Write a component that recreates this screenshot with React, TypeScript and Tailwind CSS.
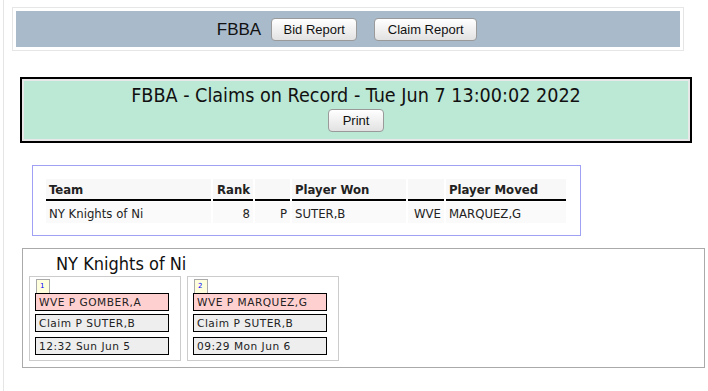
const tahoma = "font-['DejaVu_Sans_Condensed','DejaVu_Sans',sans-serif]";
const verdana = "font-['DejaVu_Sans',Verdana,sans-serif]";
const arial = "font-['Liberation_Sans',Arial,sans-serif]";

function OldButton({ label, w }: { label: string; w: string }) {
  return (
    <button
      type="button"
      className={`${arial} ${w} h-[23px] rounded-[4px] border border-[#9a9a9a] bg-gradient-to-b from-white to-[#e2e2e2] text-[13px] text-[#111] shadow-[inset_0_1px_0_#fff]`}
    >
      {label}
    </button>
  );
}

const claims = [
  { n: '1', drop: 'WVE P GOMBER,A', claim: 'Claim P SUTER,B', when: '12:32 Sun Jun 5' },
  { n: '2', drop: 'WVE P MARQUEZ,G', claim: 'Claim P SUTER,B', when: '09:29 Mon Jun 6' },
];

function ClaimCard({ c }: { c: (typeof claims)[number] }) {
  const row = `${verdana} h-[18px] w-[134px] border border-black pl-[3px] text-[10.6px] tracking-[0.5px] leading-[16px] text-[#222]`;
  return (
    <div className="h-[85px] w-[152px] border border-[#cccccc] px-[5px] pt-[2px]">
      <div
        className={`${verdana} ml-[1px] h-[14px] w-[14px] border border-b-0 border-[#aaaaaa] bg-[#ffffdd] pl-[3px] text-[7px] leading-[12px] text-[#0000ff]`}
      >
        {c.n}
      </div>
      <div className={`${row} bg-[#ffd0d0]`}>{c.drop}</div>
      <div className={`${row} mt-[3px] bg-[#eeeeee]`}>{c.claim}</div>
      <div className={`${row} mt-[5px] bg-[#eeeeee]`}>{c.when}</div>
    </div>
  );
}

export default function App() {
  return (
    <div className={`min-h-[391px] bg-white ${tahoma}`}>
      <div className="ml-[3px] min-h-[391px] border-l border-[#e6e6e6] pt-[7px]">
        {/* top nav */}
        <div className="ml-[8px] w-[672px] border border-[#e6e6e6] p-[3px]">
          <div className="flex h-[36px] items-center justify-center bg-[#a9bacb] pt-[1px] pr-[2px]">
            <span className={`${arial} mr-[10px] text-[17px] text-[#111]`}>FBBA</span>
            <OldButton label="Bid Report" w="w-[86px]" />
            <span className="w-[17px]" />
            <OldButton label="Claim Report" w="w-[103px]" />
          </div>
        </div>

        {/* title banner */}
        <div className="mt-[26px] ml-[16px] w-[672px] border-2 border-black bg-[#e8e8e8] p-[2px]">
          <div className="flex h-[58px] flex-col items-center bg-[#bce8d6] pt-[4px]">
            <div className="text-[19.6px] leading-[22px] text-[#111]">
              FBBA - Claims on Record - Tue Jun 7 13:00:02 2022
            </div>
            <div className="mt-[1px]">
              <OldButton label="Print" w="w-[56px]" />
            </div>
          </div>
        </div>

        {/* summary table */}
        <div className="mt-[22px] ml-[28px] h-[71px] w-[549px] border border-[#a0a0f4] pt-[13px] pl-[13px]">
          <div className="grid grid-cols-[165px_40px_35px_114px_36px_120px] gap-x-[2px] text-[13px] text-[#222]">
            {['Team', 'Rank', '', 'Player Won', '', 'Player Moved'].map((h, i) => (
              <div
                key={i}
                className={`h-[22px] border-b-2 border-black bg-[#f8f8f8] px-[3px] pt-[1px] font-bold ${
                  i === 1 ? 'text-right' : ''
                }`}
              >
                {h}
              </div>
            ))}
            {['NY Knights of Ni', '8', 'P', 'SUTER,B', 'WVE', 'MARQUEZ,G'].map((d, i) => (
              <div
                key={i}
                className={`mt-[1px] h-[21px] bg-[#fafafa] px-[3px] pt-[2px] ${
                  i === 1 || i === 2 || i === 4 ? 'text-right' : ''
                }`}
              >
                {d}
              </div>
            ))}
          </div>
        </div>

        {/* per-team claims */}
        <div className="mt-[12px] ml-[18px] h-[120px] w-[683px] border border-[#aaaaaa] pl-[6px]">
          <div className="pl-[27px] pt-[3px] text-[18px] leading-[24px] text-[#111]">NY Knights of Ni</div>
          <div className="flex gap-[6px]">
            {claims.map((c) => (
              <ClaimCard key={c.n} c={c} />
            ))}
          </div>
        </div>
      </div>
    </div>
  );
}
